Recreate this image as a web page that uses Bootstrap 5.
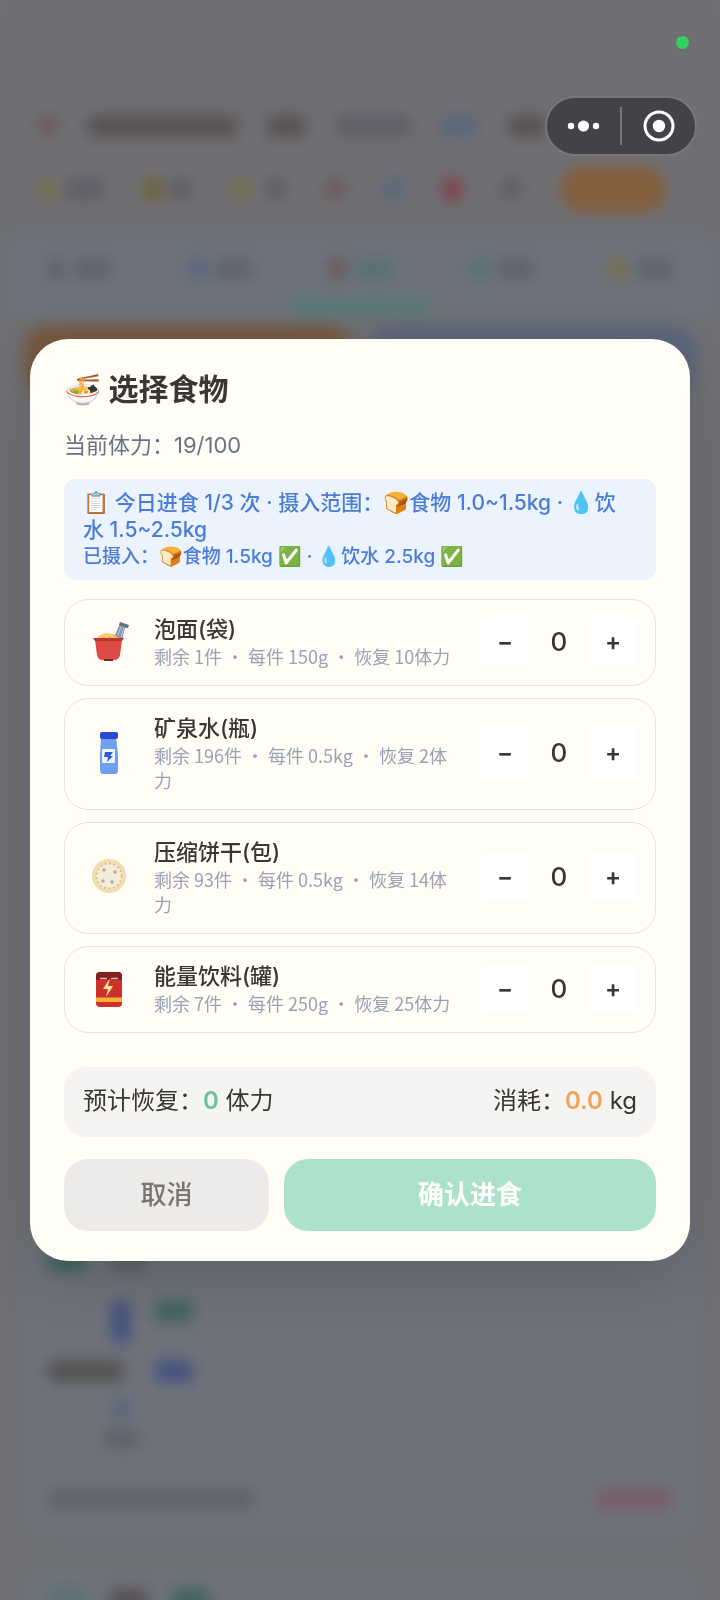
<!DOCTYPE html>
<html lang="zh-CN">
<head>
<meta charset="utf-8">
<meta name="viewport" content="width=device-width, initial-scale=1">
<title>选择食物</title>
<link href="https://cdn.jsdelivr.net/npm/bootstrap@5.3.0/dist/css/bootstrap.min.css" rel="stylesheet">
<style>
  body { font-family: Inter, "Noto Sans CJK SC", "Noto Color Emoji", sans-serif; background: #6f7073; color: #393733; }

  /* dimmed page behind the dialog */
  .backdrop-page { height: 100vh; overflow: hidden; background: #6f7073; }
  .backdrop-page .blurred { filter: blur(7px); }
  .page-head { height: 238px; padding: 104px 54px 0 38px; background: #6f6e72; }
  .head-line { height: 44px; padding-right: 120px; }
  .stat-line { height: 46px; margin-top: 18px; }
  .page-tabs { height: 76px; background: #6d727c; padding: 0 46px; }
  .blob { display: block; height: 22px; width: 20px; border-radius: 6px; background: #5f6067; }
  .w-s { width: 38px; } .w-m { width: 76px; } .w-l { width: 150px; } .w-xl { width: 206px; }
  .c-ink { background: #575352; } .c-dim { background: #61646d; } .c-gold { background: #777052; }
  .c-olive { background: #6d653f; } .c-blue { background: #5b687c; } .c-navy { background: #465380; }
  .c-red { background: #7d424b; } .c-rose { background: #775f67; } .c-teal { background: #5b7076; }
  .c-green { background: #42645f; } .c-brown { background: #6c5d5c; }
  .pill { width: 106px; height: 46px; border-radius: 23px; background: #835f3e; }
  .tab-mark { width: 140px; height: 14px; background: #577a77; }
  .banner { height: 70px; border-radius: 22px; }
  .banner-warm { background: #75583f; } .banner-cool { background: #5b657b; }
  .panel { background: #6f727a; border-radius: 20px; margin: 0 22px; padding: 0 26px; }
  .panel-main { height: 1132px; margin-top: 12px; padding-bottom: 30px; }
  .panel-next { height: 60px; margin-top: 26px; padding-top: 22px; }
  .goods { width: 145px; margin-bottom: 38px; }
  .tall { height: 44px; }

  /* system layer */
  .live-dot { position: fixed; top: 36px; right: 31px; width: 13px; height: 13px; border-radius: 50%; background: #34d15f; z-index: 5; }
  .capsule { position: fixed; top: 96px; right: 23px; width: 152px; height: 60px; border-radius: 30px; border: 2px solid #77767a; background: #434246; z-index: 5; }
  .capsule button { flex: 1; padding: 0; border: 0; background: none; color: #fff; line-height: 0; }
  .capsule hr { width: 2px; height: 38px; margin: 0; border: 0; background: #77767a; opacity: 1; }

  /* dialog */
  .sheet-wrap { position: fixed; inset: 0; padding: 0 30px; z-index: 3; }
  .sheet { background: #fffdf6; border-radius: 38px; padding: 30px 34px; box-shadow: 0 20px 60px rgba(0,0,0,.14); }
  .sheet h1 { font-size: 30px; line-height: 40px; font-weight: 700; margin: 0; }
  .stamina { font-size: 22px; line-height: 32px; margin: 20px 0 18px; color: #6b7285; }
  .notice { background: #eaf3fe; color: #4c7cd6; border-radius: 12px; padding: 10px 24px 10px 19px; font-size: 21px; line-height: 27px; font-weight: 500; }
  .notice-sub { font-size: 19px; }
  .foods { margin-top: 19px; gap: 12px; }
  .food { border: 1px solid #e3e3e4; border-radius: 24px; padding: 14px 18px 16px; }
  .food-icon { width: 52px; height: 52px; flex: none; }
  .food-text { flex: 1; min-width: 0; margin-left: 19px; padding-right: 20px; }
  .food-name { font-size: 22px; line-height: 30px; font-weight: 500; margin: 0; }
  .food-info { font-family: "Noto Sans CJK SC", sans-serif; font-size: 18px; line-height: 25px; color: #9ba2b6; margin: 0; }
  .step { width: 48px; height: 48px; padding: 0; border: 0; background: #fff; color: #393733; font-size: 24px; line-height: 48px; font-weight: 600; }
  .qty { width: 60px; text-align: center; font-size: 26px; line-height: 48px; font-weight: 500; }
  .total { margin-top: 34px; height: 70px; padding: 0 19px 2px; border-radius: 22px; background: #f6f4f2; font-size: 24px; }
  .total b { font-weight: 600; }
  .t-green { color: #6cc29c; } .t-orange { color: #eda45c; }
  .actions { margin-top: 22px; gap: 15px; }
  .act { height: 72px; border: 0; border-radius: 24px; font-size: 26px; font-weight: 500; padding: 0 0 2px; }
  .act-cancel { flex: 205; background: #edebe9; color: #79766f; }
  .act-ok { flex: 372; background: #ade2ca; color: #fff; font-weight: 700; }
</style>
</head>
<body>

<div class="backdrop-page" aria-hidden="true">
  <div class="blurred">
    <div class="page-head">
      <div class="head-line d-flex align-items-center justify-content-between">
        <span class="blob c-brown"></span><span class="blob w-l c-ink"></span><span class="blob w-s c-ink"></span>
        <span class="blob w-m"></span><span class="blob w-s c-blue"></span><span class="blob w-s c-ink"></span>
      </div>
      <div class="stat-line d-flex align-items-center justify-content-between">
        <span class="d-flex gap-2"><i class="blob c-gold"></i><i class="blob w-s"></i></span>
        <span class="d-flex gap-2"><i class="blob c-olive"></i><i class="blob"></i></span>
        <span class="d-flex gap-3"><i class="blob c-gold"></i><i class="blob"></i></span>
        <span class="blob c-brown"></span><span class="blob c-blue"></span>
        <span class="blob c-red"></span><span class="blob"></span><span class="pill"></span>
      </div>
    </div>
    <div class="page-tabs d-flex flex-column justify-content-between">
      <div class="d-flex justify-content-between pt-3 mt-1">
        <span class="d-flex gap-2"><i class="blob c-dim"></i><i class="blob w-s c-dim"></i></span>
        <span class="d-flex gap-2"><i class="blob c-blue"></i><i class="blob w-s c-dim"></i></span>
        <span class="d-flex gap-2"><i class="blob c-brown"></i><i class="blob w-s c-teal"></i></span>
        <span class="d-flex gap-2"><i class="blob c-teal"></i><i class="blob w-s c-dim"></i></span>
        <span class="d-flex gap-2"><i class="blob c-gold"></i><i class="blob w-s c-dim"></i></span>
      </div>
      <span class="tab-mark align-self-center"></span>
    </div>
    <div class="row g-3 px-3 mx-0 mt-0 pt-2">
      <div class="col mt-1"><div class="banner banner-warm"></div></div>
      <div class="col mt-1"><div class="banner banner-cool"></div></div>
    </div>
    <div class="panel panel-main d-flex flex-column justify-content-end">
      <div class="d-flex gap-4 mb-4 pb-1"><span class="blob w-s c-green"></span><span class="blob w-s"></span></div>
      <div class="goods d-flex flex-column gap-2">
        <div class="d-flex justify-content-end align-items-start gap-4"><i class="blob tall c-navy"></i><i class="blob w-s c-green"></i></div>
        <div class="d-flex justify-content-between py-2"><i class="blob w-m c-ink"></i><i class="blob w-s c-navy"></i></div>
        <i class="blob c-blue align-self-center"></i>
        <i class="blob w-s c-dim align-self-center"></i>
      </div>
      <div class="d-flex justify-content-between"><span class="blob w-xl c-dim"></span><span class="blob w-m c-rose"></span></div>
    </div>
    <div class="panel panel-next d-flex gap-4 align-items-start">
      <span class="blob w-s tall c-teal"></span><span class="blob w-s tall c-ink"></span><span class="blob w-s tall c-green"></span>
    </div>
  </div>
</div>

<span class="live-dot"></span>
<div class="capsule d-flex align-items-center">
  <button type="button" aria-label="更多"><svg width="34" height="14" viewBox="0 0 34 14" fill="#fff"><circle cx="4" cy="7" r="3.2"/><circle cx="16.500" cy="7" r="5.600"/><circle cx="29" cy="7" r="3.200"/></svg></button>
  <hr>
  <button type="button" aria-label="关闭"><svg width="32" height="32" viewBox="0 0 32 32"><circle cx="16" cy="16" r="14" fill="none" stroke="#fff" stroke-width="3"/><circle cx="16" cy="16" r="6.200" fill="#fff"/></svg></button>
</div>

<div class="sheet-wrap d-flex align-items-center">
  <main class="sheet w-100" role="dialog" aria-labelledby="sheet-title">
    <h1 id="sheet-title">🍜 选择食物</h1>
    <p class="stamina">当前体力：19/100</p>
    <div class="notice">
      <div>📋 今日进食 1/3 次 · 摄入范围：🍞食物 1.0~1.5kg · 💧饮水 1.5~2.5kg</div>
      <div class="notice-sub">已摄入：🍞食物 1.5kg ✅ · 💧饮水 2.5kg ✅</div>
    </div>

    <div class="foods d-flex flex-column">
      <section class="food d-flex align-items-center">
        <svg class="food-icon" viewBox="0 0 52 52"><path d="M37 7l8 3-1 2-2 0-3 12-8-3 5-11z" fill="#8798ad"/><path d="M37 6l9 3-1 3-9-3z" fill="#5e7189"/><path d="M38 11l-3 8M41 12l-3 9" stroke="#c3ceda" stroke-width="1"/><path d="M14 24c0-8 20-9 22 0z" fill="#e9b44e"/><path d="M16 23c3-5 7-4 9 0M22 21c3-4 7-2 10 2" fill="none" stroke="#f8d477" stroke-width="2"/><path d="M12 24h27l-2 15q-1 5-6 5H20q-5 0-6-5z" fill="#dd4b45"/><path d="M10 22h31l-2 3H12z" fill="#b93635"/><path d="M21 43h9v2h-9z" fill="#7e2525"/></svg>
        <div class="food-text"><h2 class="food-name">泡面(袋)</h2><p class="food-info">剩余 1件 · 每件 150g · 恢复 10体力</p></div>
        <button type="button" class="step" aria-label="减少泡面">−</button><output class="qty">0</output><button type="button" class="step" aria-label="增加泡面">+</button>
      </section>
      <section class="food d-flex align-items-center">
        <svg class="food-icon" viewBox="0 0 52 52"><path d="M18 10h15l2 18v15q0 4-3 4H20q-3 0-3-4V28z" fill="#719ff0"/><rect x="17" y="5" width="18" height="7" rx="2" fill="#274cd2"/><rect x="19" y="22" width="13" height="14" rx="1" fill="#edf4ff"/><path d="M22 25h8l-3 4h3l-6 6 1-5h-4z" fill="#2f5bd8"/></svg>
        <div class="food-text"><h2 class="food-name">矿泉水(瓶)</h2><p class="food-info">剩余 196件 · 每件 0.5kg · 恢复 2体力</p></div>
        <button type="button" class="step" aria-label="减少矿泉水">−</button><output class="qty">0</output><button type="button" class="step" aria-label="增加矿泉水">+</button>
      </section>
      <section class="food d-flex align-items-center">
        <svg class="food-icon" viewBox="0 0 52 52"><circle cx="26" cy="25" r="17" fill="#f0dcae"/><circle cx="26" cy="25" r="13" fill="#f5ecd8"/><circle cx="26" cy="25" r="12.500" fill="none" stroke="#d0b98b" stroke-width="1.500" stroke-dasharray="2 2.500"/><g fill="#b7a4a0"><circle cx="21" cy="19" r="1.700"/><circle cx="32" cy="21" r="1.700"/><circle cx="20" cy="30" r="1.700"/><circle cx="29" cy="31" r="1.700"/></g></svg>
        <div class="food-text"><h2 class="food-name">压缩饼干(包)</h2><p class="food-info">剩余 93件 · 每件 0.5kg · 恢复 14体力</p></div>
        <button type="button" class="step" aria-label="减少压缩饼干">−</button><output class="qty">0</output><button type="button" class="step" aria-label="增加压缩饼干">+</button>
      </section>
      <section class="food d-flex align-items-center">
        <svg class="food-icon" viewBox="0 0 52 52"><rect x="13" y="9" width="26" height="35" rx="4" fill="#ce302c"/><path d="M13 17v-4q0-4 4-4h18q4 0 4 4v4z" fill="#80201f"/><path d="M17 15.500h7M28 15.500h7" stroke="#efb3a8" stroke-width="1.300"/><path d="M13 34.500h26v4.500H13z" fill="#f2b336"/><path d="M27 15l-7 11h5l-2 8 7-11h-5z" fill="#ffe39a"/></svg>
        <div class="food-text"><h2 class="food-name">能量饮料(罐)</h2><p class="food-info">剩余 7件 · 每件 250g · 恢复 25体力</p></div>
        <button type="button" class="step" aria-label="减少能量饮料">−</button><output class="qty">0</output><button type="button" class="step" aria-label="增加能量饮料">+</button>
      </section>
    </div>

    <div class="total d-flex align-items-center justify-content-between">
      <span>预计恢复：<b class="t-green">0</b> 体力</span>
      <span>消耗：<b class="t-orange">0.0</b> kg</span>
    </div>
    <div class="actions d-flex">
      <button type="button" class="act act-cancel">取消</button>
      <button type="button" class="act act-ok">确认进食</button>
    </div>
  </main>
</div>

<script src="https://cdn.jsdelivr.net/npm/bootstrap@5.3.0/dist/js/bootstrap.bundle.min.js"></script>
</body>
</html>
